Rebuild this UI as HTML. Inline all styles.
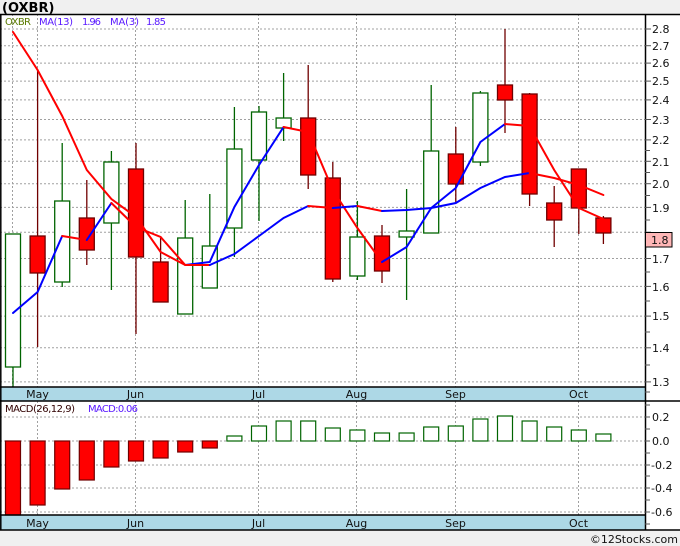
<!DOCTYPE html>
<html><head><meta charset="utf-8">
<style>
html,body{margin:0;padding:0;background:#f0f0f0;}
svg{display:block;font-family:"DejaVu Sans","Liberation Sans",sans-serif;}
</style></head><body>
<svg width="680" height="546" viewBox="0 0 680 546" xmlns="http://www.w3.org/2000/svg">
<rect x="0" y="0" width="680" height="546" fill="#f0f0f0"/>
<text x="2" y="12" font-size="13" font-weight="bold" fill="#000">(OXBR)</text>
<rect x="0" y="14" width="680" height="516" fill="#fff"/>
<rect x="0" y="387" width="645" height="14" fill="#add8e6"/>
<rect x="0" y="515" width="645" height="15" fill="#add8e6"/>
<g stroke="#a0a0a0" stroke-width="1" stroke-dasharray="2,2" fill="none">
<line x1="0" y1="29" x2="645" y2="29"/><line x1="0" y1="45.7" x2="645" y2="45.7"/><line x1="0" y1="63.1" x2="645" y2="63.1"/><line x1="0" y1="81.1" x2="645" y2="81.1"/><line x1="0" y1="99.9" x2="645" y2="99.9"/><line x1="0" y1="119.5" x2="645" y2="119.5"/><line x1="0" y1="139.9" x2="645" y2="139.9"/><line x1="0" y1="161.3" x2="645" y2="161.3"/><line x1="0" y1="183.7" x2="645" y2="183.7"/><line x1="0" y1="207.4" x2="645" y2="207.4"/><line x1="0" y1="232.2" x2="645" y2="232.2"/><line x1="0" y1="258.5" x2="645" y2="258.5"/><line x1="0" y1="286.4" x2="645" y2="286.4"/><line x1="0" y1="316.1" x2="645" y2="316.1"/><line x1="0" y1="347.8" x2="645" y2="347.8"/><line x1="0" y1="381.9" x2="645" y2="381.9"/>
<line x1="12.5" y1="14" x2="12.5" y2="387"/><line x1="37.5" y1="14" x2="37.5" y2="387"/><line x1="135.5" y1="14" x2="135.5" y2="387"/><line x1="258.5" y1="14" x2="258.5" y2="387"/><line x1="356.5" y1="14" x2="356.5" y2="387"/><line x1="455.5" y1="14" x2="455.5" y2="387"/><line x1="578.5" y1="14" x2="578.5" y2="387"/>
<line x1="0" y1="417" x2="645" y2="417"/><line x1="0" y1="441" x2="645" y2="441"/><line x1="0" y1="465" x2="645" y2="465"/><line x1="0" y1="488" x2="645" y2="488"/><line x1="0" y1="512" x2="645" y2="512"/>
<line x1="37.5" y1="401" x2="37.5" y2="515"/><line x1="135.5" y1="401" x2="135.5" y2="515"/><line x1="258.5" y1="401" x2="258.5" y2="515"/><line x1="356.5" y1="401" x2="356.5" y2="515"/><line x1="455.5" y1="401" x2="455.5" y2="515"/><line x1="578.5" y1="401" x2="578.5" y2="515"/>
</g>
<g stroke="#006400" stroke-width="1.3" fill="#fff">
<line x1="13" y1="234" x2="13" y2="387"/><rect x="5.5" y="234" width="15" height="133"/>
<line x1="62.2" y1="143" x2="62.2" y2="287"/><rect x="54.7" y="201" width="15" height="81"/>
<line x1="111.4" y1="151" x2="111.4" y2="290"/><rect x="103.9" y="162" width="15" height="61"/>
<line x1="185.2" y1="200" x2="185.2" y2="314"/><rect x="177.7" y="238" width="15" height="76"/>
<line x1="209.8" y1="194" x2="209.8" y2="288"/><rect x="202.3" y="246" width="15" height="42"/>
<line x1="234.4" y1="107" x2="234.4" y2="257"/><rect x="226.9" y="149" width="15" height="79"/>
<line x1="259" y1="106" x2="259" y2="221"/><rect x="251.5" y="112" width="15" height="48"/>
<line x1="283.6" y1="73" x2="283.6" y2="141"/><rect x="276.1" y="118" width="15" height="10"/>
<line x1="357.4" y1="201" x2="357.4" y2="280"/><rect x="349.9" y="237" width="15" height="39"/>
<line x1="406.6" y1="189" x2="406.6" y2="300"/><rect x="399.1" y="231" width="15" height="6"/>
<line x1="431.2" y1="85" x2="431.2" y2="233"/><rect x="423.7" y="151" width="15" height="82"/>
<line x1="480.4" y1="91" x2="480.4" y2="166"/><rect x="472.9" y="93" width="15" height="69"/>
</g>
<g stroke="#700000" stroke-width="1.3" fill="#ff0000">
<line x1="37.6" y1="70" x2="37.6" y2="347"/><rect x="30.1" y="236" width="15" height="37"/>
<line x1="86.8" y1="180" x2="86.8" y2="265"/><rect x="79.3" y="218" width="15" height="32"/>
<line x1="136" y1="143" x2="136" y2="334"/><rect x="128.5" y="169" width="15" height="88"/>
<line x1="160.6" y1="238" x2="160.6" y2="302"/><rect x="153.1" y="262" width="15" height="40"/>
<line x1="308.2" y1="65" x2="308.2" y2="189"/><rect x="300.7" y="118" width="15" height="57"/>
<line x1="332.8" y1="162" x2="332.8" y2="282"/><rect x="325.3" y="178" width="15" height="101"/>
<line x1="382" y1="225" x2="382" y2="283"/><rect x="374.5" y="236" width="15" height="35"/>
<line x1="455.8" y1="127" x2="455.8" y2="202"/><rect x="448.3" y="154" width="15" height="30"/>
<line x1="505" y1="29" x2="505" y2="133"/><rect x="497.5" y="85" width="15" height="15"/>
<line x1="529.6" y1="93" x2="529.6" y2="206"/><rect x="522.1" y="94" width="15" height="100"/>
<line x1="554.2" y1="186" x2="554.2" y2="247"/><rect x="546.7" y="203" width="15" height="17"/>
<line x1="578.8" y1="169" x2="578.8" y2="234"/><rect x="571.3" y="169" width="15" height="39"/>
<line x1="603.4" y1="216" x2="603.4" y2="244"/><rect x="595.9" y="218" width="15" height="15"/>
</g>
<g stroke-width="2" fill="none" stroke-linecap="round">
<polyline stroke="#ff0000" points="13,32 37.6,70 62.2,116 86.8,170 111.4,199 136,217 160.6,252 185.2,265"/>
<polyline stroke="#0000ff" points="185.2,265 209.8,262 234.4,207 259,165 283.6,127"/>
<polyline stroke="#ff0000" points="283.6,127 308.2,132 332.8,190 357.4,228 382,262"/>
<polyline stroke="#0000ff" points="382,262 406.6,247 431.2,208 455.8,188 480.4,142 505,124"/>
<polyline stroke="#ff0000" points="505,124 529.6,126 554.2,170 578.8,208 603.4,219"/>
<polyline stroke="#0000ff" points="13,313 37.6,292 62.2,236"/>
<polyline stroke="#ff0000" points="62.2,236 86.8,240"/>
<polyline stroke="#0000ff" points="86.8,240 111.4,203"/>
<polyline stroke="#ff0000" points="111.4,203 136,227 160.6,237 185.2,265 209.8,265"/>
<polyline stroke="#0000ff" points="209.8,265 234.4,254 259,236 283.6,218 308.2,206"/>
<polyline stroke="#ff0000" points="308.2,206 332.8,208"/>
<polyline stroke="#0000ff" points="332.8,208 357.4,206"/>
<polyline stroke="#ff0000" points="357.4,206 382,211"/>
<polyline stroke="#0000ff" points="382,211 406.6,210 431.2,208 455.8,203 480.4,188 505,177 529.6,173"/>
<polyline stroke="#ff0000" points="529.6,173 554.2,178 578.8,185 603.4,195"/>
</g>
<g stroke="#700000" stroke-width="1.2" fill="#ff0000">
<rect x="5.5" y="441" width="15" height="74"/>
<rect x="30.1" y="441" width="15" height="64"/>
<rect x="54.7" y="441" width="15" height="48"/>
<rect x="79.3" y="441" width="15" height="39"/>
<rect x="103.9" y="441" width="15" height="26"/>
<rect x="128.5" y="441" width="15" height="20"/>
<rect x="153.1" y="441" width="15" height="17"/>
<rect x="177.7" y="441" width="15" height="11"/>
<rect x="202.3" y="441" width="15" height="7"/>
</g>
<g stroke="#006400" stroke-width="1.2" fill="#fff">
<rect x="226.9" y="436" width="15" height="5"/>
<rect x="251.5" y="426" width="15" height="15"/>
<rect x="276.1" y="421" width="15" height="20"/>
<rect x="300.7" y="421" width="15" height="20"/>
<rect x="325.3" y="428" width="15" height="13"/>
<rect x="349.9" y="430" width="15" height="11"/>
<rect x="374.5" y="433" width="15" height="8"/>
<rect x="399.1" y="433" width="15" height="8"/>
<rect x="423.7" y="427" width="15" height="14"/>
<rect x="448.3" y="426" width="15" height="15"/>
<rect x="472.9" y="419" width="15" height="22"/>
<rect x="497.5" y="416" width="15" height="25"/>
<rect x="522.1" y="421" width="15" height="20"/>
<rect x="546.7" y="427" width="15" height="14"/>
<rect x="571.3" y="430" width="15" height="11"/>
<rect x="595.9" y="434" width="15" height="7"/>
</g>
<g stroke="#000" stroke-width="1.5" fill="none">
<line x1="0" y1="14.5" x2="680" y2="14.5"/>
<line x1="0.8" y1="14" x2="0.8" y2="530"/>
<line x1="645.5" y1="14" x2="645.5" y2="530"/>
<line x1="0" y1="387" x2="645" y2="387"/>
<line x1="0" y1="401" x2="680" y2="401"/>
<line x1="0" y1="515" x2="645" y2="515"/>
<line x1="0" y1="530" x2="680" y2="530"/>
</g>
<g stroke="#555" stroke-width="1">
<line x1="645" y1="29" x2="651" y2="29"/><line x1="645" y1="45.7" x2="651" y2="45.7"/><line x1="645" y1="63.1" x2="651" y2="63.1"/><line x1="645" y1="81.1" x2="651" y2="81.1"/><line x1="645" y1="99.9" x2="651" y2="99.9"/><line x1="645" y1="119.5" x2="651" y2="119.5"/><line x1="645" y1="139.9" x2="651" y2="139.9"/><line x1="645" y1="161.3" x2="651" y2="161.3"/><line x1="645" y1="183.7" x2="651" y2="183.7"/><line x1="645" y1="207.4" x2="651" y2="207.4"/><line x1="645" y1="232.2" x2="651" y2="232.2"/><line x1="645" y1="258.5" x2="651" y2="258.5"/><line x1="645" y1="286.4" x2="651" y2="286.4"/><line x1="645" y1="316.1" x2="651" y2="316.1"/><line x1="645" y1="347.8" x2="651" y2="347.8"/><line x1="645" y1="381.9" x2="651" y2="381.9"/>
<line x1="645" y1="150.5" x2="650" y2="150.5"/><line x1="645" y1="172.5" x2="650" y2="172.5"/><line x1="645" y1="195.5" x2="650" y2="195.5"/><line x1="645" y1="220" x2="650" y2="220"/><line x1="645" y1="245" x2="650" y2="245"/><line x1="645" y1="272" x2="650" y2="272"/><line x1="645" y1="301" x2="650" y2="301"/><line x1="645" y1="332" x2="650" y2="332"/><line x1="645" y1="365" x2="650" y2="365"/>
<line x1="645" y1="417" x2="650" y2="417"/><line x1="645" y1="441" x2="650" y2="441"/><line x1="645" y1="465" x2="650" y2="465"/><line x1="645" y1="488" x2="650" y2="488"/><line x1="645" y1="512" x2="650" y2="512"/>
<line x1="645" y1="405" x2="650" y2="405"/><line x1="645" y1="429" x2="650" y2="429"/><line x1="645" y1="453" x2="650" y2="453"/><line x1="645" y1="476" x2="650" y2="476"/><line x1="645" y1="500" x2="650" y2="500"/><line x1="645" y1="524" x2="650" y2="524"/>
<line x1="645" y1="392" x2="650" y2="392"/>
</g>
<g font-size="11" fill="#111">
<text x="652" y="33">2.8</text><text x="652" y="50">2.7</text><text x="652" y="67">2.6</text><text x="652" y="85">2.5</text><text x="652" y="104">2.4</text><text x="652" y="124">2.3</text><text x="652" y="144">2.2</text><text x="652" y="166">2.1</text><text x="652" y="188">2.0</text><text x="652" y="212">1.9</text><text x="652" y="263">1.7</text><text x="652" y="291">1.6</text><text x="652" y="320">1.5</text><text x="652" y="352">1.4</text><text x="652" y="386">1.3</text>
<text x="652" y="421">0.2</text><text x="652" y="445">0.0</text><text x="651" y="469">-0.2</text><text x="651" y="492">-0.4</text><text x="651" y="516">-0.6</text>
</g>
<rect x="645.5" y="232.5" width="26.5" height="14.5" fill="#ffb6b6" stroke="#000" stroke-width="1"/>
<text x="651" y="244" font-size="11" fill="#111">1.8</text>
<g font-size="11" fill="#111" text-anchor="middle">
<text x="37.5" y="398">May</text><text x="135.5" y="398">Jun</text><text x="258.5" y="398">Jul</text><text x="356.5" y="398">Aug</text><text x="455.5" y="398">Sep</text><text x="578.5" y="398">Oct</text>
<text x="37.5" y="527">May</text><text x="135.5" y="527">Jun</text><text x="258.5" y="527">Jul</text><text x="356.5" y="527">Aug</text><text x="455.5" y="527">Sep</text><text x="578.5" y="527">Oct</text>
</g>
<text x="5" y="25" font-size="10" fill="#5a7a00" textLength="26">OXBR</text>
<g font-size="10" fill="#5a1aff">
<text x="39" y="25" textLength="34">MA(13)</text>
<text x="82" y="25" textLength="19">1.96</text>
<text x="110" y="25" textLength="29">MA(3)</text>
<text x="146" y="25" textLength="20">1.85</text>
</g>
<text x="5" y="412" font-size="10" fill="#300000" textLength="70">MACD(26,12,9)</text>
<text x="88" y="412" font-size="10" fill="#5a1aff" textLength="50">MACD:0.06</text>
<text x="678" y="543" font-size="11" fill="#111" text-anchor="end">©12Stocks.com</text>
</svg>
</body></html>
